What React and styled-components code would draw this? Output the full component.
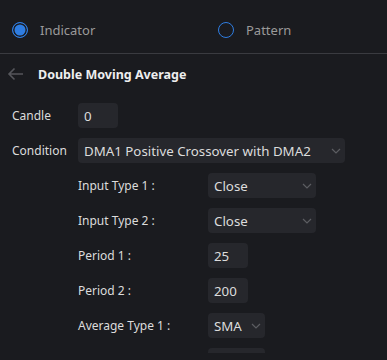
import React from 'react';
import styled, {createGlobalStyle} from 'styled-components';

const colors = {
  bg: '#1a1b1f',
  field: '#26272c',
  text: '#dcdcdc',
  muted: '#9a9a9a',
  blue: '#2f7de1',
  line: '#3a3b40',
};

const GlobalStyle = createGlobalStyle`
  html, body {
    margin: 0;
    background: ${colors.bg};
    font-family: "Noto Sans", "Open Sans", sans-serif;
  }
`;

const StyledPanel = styled.div`
  width: 387px;
  height: 360px;
  background: ${colors.bg};
  overflow: hidden;
`;

const StyledTabs = styled.div`
  display: flex;
  align-items: center;
  box-sizing: border-box;
  height: 54px;
  padding: 7px 0 0 12px;
  border-bottom: 1px solid ${colors.line};
`;

const StyledOption = styled.label`
  display: flex;
  align-items: center;
  flex-shrink: 0;
  gap: 12px;
  width: 206px;
  color: ${colors.muted};
  font-size: 13px;
`;

const StyledRadio = styled.span`
  box-sizing: border-box;
  width: 16px;
  height: 16px;
  border-radius: 50%;
  border: 1.5px solid ${colors.blue};
  background: ${p => (p.checked ? colors.blue : 'transparent')};
  box-shadow: ${p => (p.checked ? `inset 0 0 0 1.5px ${colors.bg}` : 'none')};
`;

const StyledBack = styled.div`
  display: flex;
  align-items: center;
  gap: 14px;
  height: 40px;
  padding-left: 7px;
`;

const StyledTitle = styled.h3`
  margin: 0;
  color: #eeeeee;
  font-size: 12.5px;
  font-weight: 700;
`;

const StyledForm = styled.div`
  display: flex;
  flex-direction: column;
  gap: 10px;
  height: 250px;
  margin-top: 9px;
  padding-left: 12px;
  overflow: hidden;
`;

const StyledRow = styled.div`
  display: flex;
  align-items: center;
  flex-shrink: 0;
  height: 25px;
  padding-left: ${p => (p.nested ? '66px' : '0')};
`;

const StyledLabel = styled.span`
  width: ${p => p.width}px;
  flex-shrink: 0;
  color: ${colors.text};
  font-size: 12px;
`;

const StyledInput = styled.input`
  box-sizing: border-box;
  width: 40px;
  height: 25px;
  padding: 0 6px;
  border: none;
  border-radius: 4px;
  background: ${colors.field};
  color: ${colors.text};
  font: 13.3px "Noto Sans", sans-serif;
  outline: none;
`;

const StyledSelect = styled.div`
  display: flex;
  align-items: center;
  justify-content: space-between;
  box-sizing: border-box;
  width: ${p => p.width}px;
  height: 25px;
  padding: 0 4px 0 6px;
  border-radius: 4px;
  background: ${colors.field};
  color: ${colors.text};
  font-size: 13.3px;
  white-space: nowrap;
`;

const Chevron = () => (
  <svg width='10' height='6' viewBox='0 0 10 6' fill='none'>
    <path d='M1 1l4 4 4-4' stroke='#5c5d62' strokeWidth='1.2' />
  </svg>
);

const BackArrow = () => (
  <svg width='17' height='14' viewBox='0 0 17 14' fill='none'>
    <path d='M16 7H2M7.5 1.5L2 7l5.5 5.5' stroke='#55565b' strokeWidth='1.6' />
  </svg>
);

const Select = ({width, children}) => (
  <StyledSelect width={width}>
    <span>{children}</span>
    <Chevron />
  </StyledSelect>
);

const params = [
  {label: 'Input Type 1 :', type: 'select', value: 'Close', width: 108},
  {label: 'Input Type 2 :', type: 'select', value: 'Close', width: 108},
  {label: 'Period 1 :', type: 'input', value: '25'},
  {label: 'Period 2 :', type: 'input', value: '200'},
  {label: 'Average Type 1 :', type: 'select', value: 'SMA', width: 57},
  {label: 'Average Type 2 :', type: 'select', value: 'SMA', width: 57},
];

export default function App() {
  return (
    <StyledPanel>
      <GlobalStyle />
      <StyledTabs>
        <StyledOption>
          <StyledRadio checked />
          Indicator
        </StyledOption>
        <StyledOption>
          <StyledRadio />
          Pattern
        </StyledOption>
      </StyledTabs>
      <StyledBack>
        <BackArrow />
        <StyledTitle>Double Moving Average</StyledTitle>
      </StyledBack>
      <StyledForm>
        <StyledRow>
          <StyledLabel width={66}>Candle</StyledLabel>
          <StyledInput readOnly value='0' />
        </StyledRow>
        <StyledRow>
          <StyledLabel width={66}>Condition</StyledLabel>
          <Select width={267}>DMA1 Positive Crossover with DMA2</Select>
        </StyledRow>
        {params.map(p => (
          <StyledRow nested key={p.label}>
            <StyledLabel width={130}>{p.label}</StyledLabel>
            {p.type === 'select'
              ? <Select width={p.width}>{p.value}</Select>
              : <StyledInput readOnly value={p.value} />}
          </StyledRow>
        ))}
      </StyledForm>
    </StyledPanel>
  );
}
